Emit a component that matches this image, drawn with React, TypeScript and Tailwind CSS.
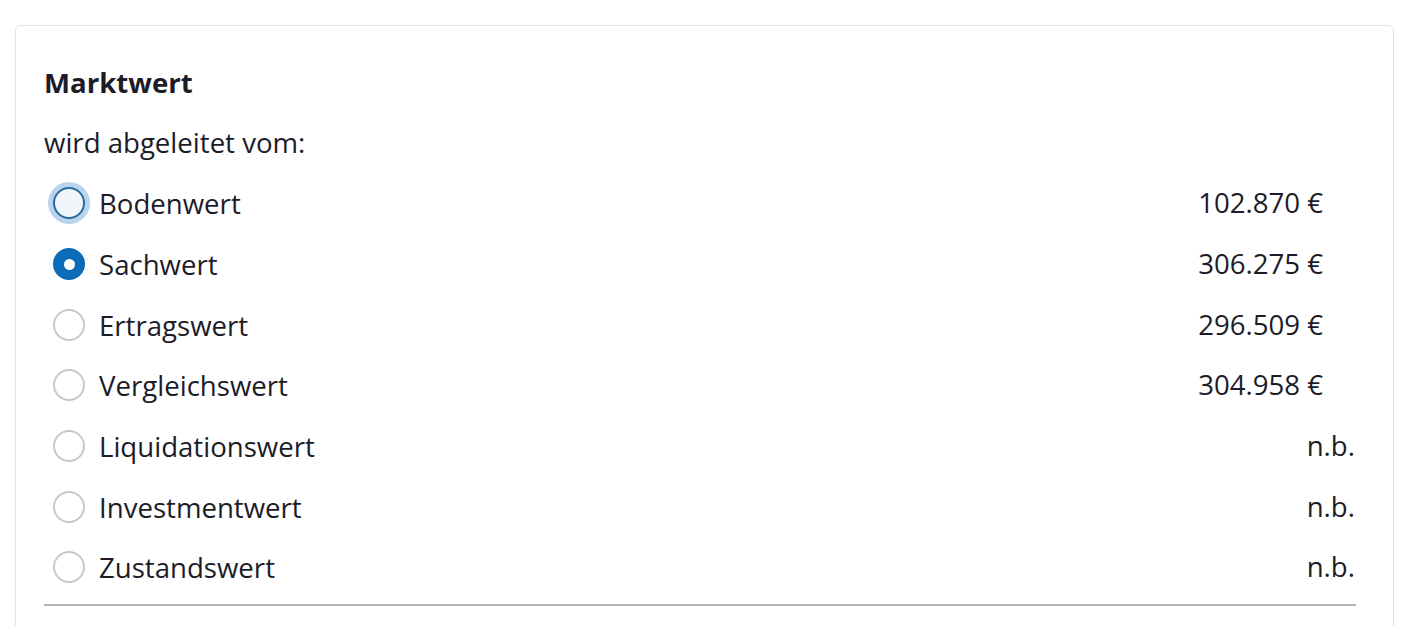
import React from "react";

const rows: { label: string; value: string; euro: boolean; state: "focus" | "checked" | "none" }[] = [
  { label: "Bodenwert", value: "102.870 €", euro: true, state: "focus" },
  { label: "Sachwert", value: "306.275 €", euro: true, state: "checked" },
  { label: "Ertragswert", value: "296.509 €", euro: true, state: "none" },
  { label: "Vergleichswert", value: "304.958 €", euro: true, state: "none" },
  { label: "Liquidationswert", value: "n.b.", euro: false, state: "none" },
  { label: "Investmentwert", value: "n.b.", euro: false, state: "none" },
  { label: "Zustandswert", value: "n.b.", euro: false, state: "none" },
];

function Radio({ state }: { state: "focus" | "checked" | "none" }) {
  if (state === "checked") {
    return (
      <span className="flex h-[32px] w-[32px] items-center justify-center rounded-full bg-[#0a6cb8]">
        <span className="h-[11px] w-[11px] rounded-full bg-white" />
      </span>
    );
  }
  if (state === "focus") {
    return (
      <span className="h-[32px] w-[32px] rounded-full border-[2px] border-[#2a6a9e] bg-[#f1f6fb] shadow-[0_0_0_5px_#b9d4ec]" />
    );
  }
  return <span className="h-[32px] w-[32px] rounded-full border-[2px] border-[#c8c8c8] bg-white" />;
}

export default function App() {
  return (
    <div className="h-[626px] w-[1404px] overflow-hidden bg-white pt-[25px] pl-[15px] pr-[10px] font-['Open_Sans',sans-serif] text-[#1c1c28]">
      <div className="h-[640px] rounded-[6px] border border-[#e3e3e3] shadow-[0_0_2px_rgba(0,0,0,0.06)] pl-[28px] pr-[37px] pt-[36px]">
        <div className="text-[27.6px] font-bold leading-[40px]">Marktwert</div>
        <div className="mt-[20px] text-[27.6px] leading-[40px]">wird abgeleitet vom:</div>
        <div className="mt-[11px]">
          {rows.map((r) => (
            <div key={r.label} className="flex h-[60.7px] items-center">
              <div className="flex w-[48px] justify-center pl-[2px]">
                <Radio state={r.state} />
              </div>
              <span className="ml-[7px] text-[27.6px] leading-[40px]">{r.label}</span>
              <span className={"ml-auto text-[27.6px] leading-[40px] -translate-y-[1px] " + (r.euro ? "mr-[33px]" : "mr-[1px]")}>
                {r.value}
              </span>
            </div>
          ))}
        </div>
        <div className="mt-[6px] h-[2px] bg-[#b3b3b3]" />
      </div>
    </div>
  );
}
